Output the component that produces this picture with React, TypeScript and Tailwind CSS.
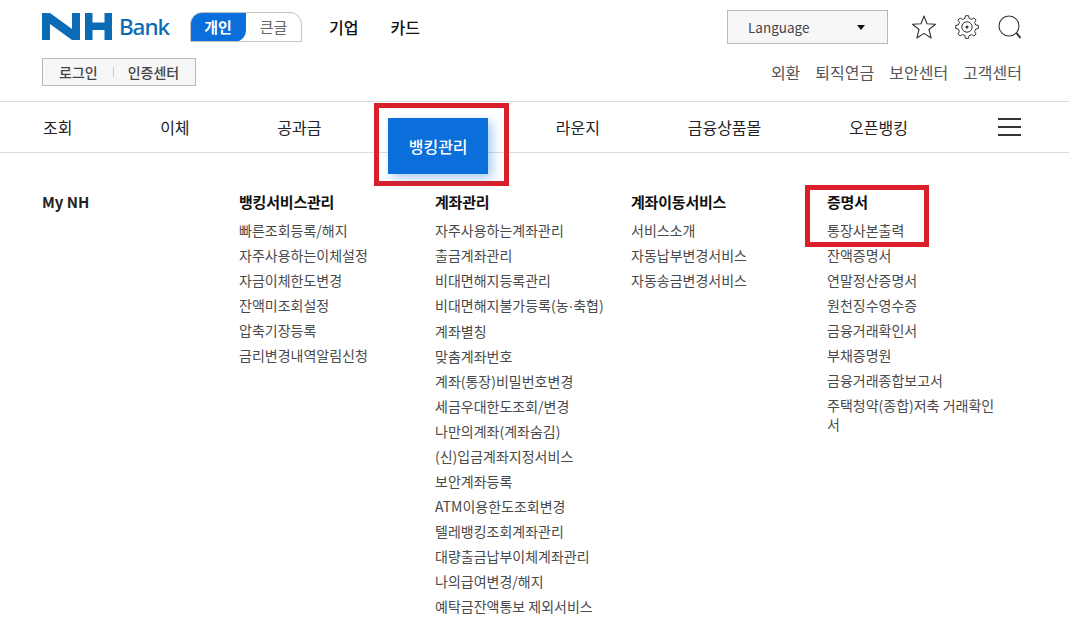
import React from "react";

const cols = [
  { t: "뱅킹서비스관리", items: ["빠른조회등록/해지", "자주사용하는이체설정", "자금이체한도변경", "잔액미조회설정", "압축기장등록", "금리변경내역알림신청"] },
  { t: "계좌관리", items: ["자주사용하는계좌관리", "출금계좌관리", "비대면해지등록관리", "비대면해지불가등록(농·축협)", "계좌별칭", "맞춤계좌번호", "계좌(통장)비밀번호변경", "세금우대한도조회/변경", "나만의계좌(계좌숨김)", "(신)입금계좌지정서비스", "보안계좌등록", "ATM이용한도조회변경", "텔레뱅킹조회계좌관리", "대량출금납부이체계좌관리", "나의급여변경/해지", "예탁금잔액통보 제외서비스"] },
  { t: "계좌이동서비스", items: ["서비스소개", "자동납부변경서비스", "자동송금변경서비스"] },
  { t: "증명서", items: ["통장사본출력", "잔액증명서", "연말정산증명서", "원천징수영수증", "금융거래확인서", "부채증명원", "금융거래종합보고서", "주택청약(종합)저축 거래확인서"] },
];

function gearPath() {
  const cx = 12, cy = 12, pts: string[] = [];
  const n = 8, ro = 11.4, ri = 8.9;
  for (let i = 0; i < n; i++) {
    const a = (i * 2 * Math.PI) / n - Math.PI / 2;
    const step = (2 * Math.PI) / n;
    const list: [number, number][] = [
      [ri, a - step * 0.3],
      [ro, a - step * 0.17],
      [ro, a + step * 0.17],
      [ri, a + step * 0.3],
    ];
    list.forEach(([r, t]) => pts.push(`${(cx + r * Math.cos(t)).toFixed(2)} ${(cy + r * Math.sin(t)).toFixed(2)}`));
  }
  return "M" + pts.join("L") + "Z";
}

function Label({ s }: { s: string }) {
  const parts = s.split("·");
  if (parts.length === 1) return <>{s}</>;
  return (
    <>
      {parts[0]}
      <span className="font-['Liberation_Sans']">·</span>
      {parts[1]}
    </>
  );
}

function Col({ t, items, w }: { t: string; items: string[]; w: string }) {
  return (
    <div className={w}>
      <div className="text-[15px] leading-[20px] font-bold text-[#111] tracking-[-0.2px]">{t}</div>
      <ul className="mt-[6px] text-[14px] text-[#4a4a4a]">
        {items.map((i) => (
          <li key={i} className="leading-[19px] py-[3px] break-all"><Label s={i} /></li>
        ))}
      </ul>
    </div>
  );
}

export default function App() {
  return (
    <div className="relative w-[1069px] h-[636px] overflow-hidden bg-white font-['Noto_Sans_CJK_KR','Noto_Sans',sans-serif]">
      <header className="h-[101px] pl-[42px] pr-[47px] pt-[10px]">
        <div className="flex items-center h-[34px]">
          <svg width="70" height="27" viewBox="0 0 70 27" className="shrink-0 mt-[-1px]">
            <g fill="#0b6cb5">
              <polygon points="0,0 8,0 30,16 30,0 38,0 38,27 30,27 8,11 8,27 0,27" />
              <rect x="43" y="0" width="7.5" height="27" />
              <rect x="62.5" y="0" width="7.5" height="27" />
              <rect x="43" y="9.5" width="27" height="7.5" />
            </g>
          </svg>
          <span className="ml-[7px] w-[51px] text-[22.5px] leading-[28px] text-[#0b6cb5] font-['Noto_Sans'] font-medium tracking-[-1.1px] whitespace-nowrap">Bank</span>
          <div className="ml-[20px] flex h-[30px] w-[112px] rounded-t-[12px] border border-[#c4c4c4] text-[15px] overflow-hidden">
            <div className="w-[56px] m-[-1px] bg-[#0a6edb] rounded-tl-[12px] rounded-br-[12px] text-white font-bold flex items-center justify-center">개인</div>
            <div className="flex-1 text-[#666] flex items-center justify-center pl-[1px]">큰글</div>
          </div>
          <span className="ml-[27px] text-[16px] font-medium text-[#111]">기업</span>
          <span className="ml-[32px] text-[16px] font-medium text-[#111]">카드</span>
          <div className="ml-auto mr-[24px] flex items-center w-[161px] h-[34px] bg-[#f7f7f7] border border-[#b8b8b8] pl-[20px] pr-[22px] justify-between">
            <span className="text-[13.5px] text-[#444]">Language</span>
            <span className="w-0 h-0 border-x-[4px] border-x-transparent border-t-[5px] border-t-[#111]" />
          </div>
          <svg width="24" height="24" viewBox="0 0 24 24" fill="none" stroke="#333" strokeWidth="1.1" strokeLinejoin="round" className="shrink-0">
            <polygon points="12,1 15,8.7 23.5,9.3 17,14.5 19.1,23 12,18.4 4.9,23 7,14.5 0.5,9.3 9,8.7" />
          </svg>
          <svg width="24" height="24" viewBox="0 0 24 24" fill="none" stroke="#333" strokeWidth="1" strokeLinejoin="round" className="shrink-0 ml-[19px]">
            <path d={gearPath()} />
            <circle cx="12" cy="12" r="5.2" />
            <circle cx="12" cy="12" r="1.5" fill="#333" stroke="none" />
          </svg>
          <svg width="24" height="24" viewBox="0 0 24 24" fill="none" stroke="#333" className="shrink-0 ml-[19px]">
            <circle cx="11" cy="11" r="10" strokeWidth="1.1" />
            <path d="M18.5 18l4 5" strokeWidth="2" />
          </svg>
        </div>
        <div className="flex items-center justify-between mt-[14px] h-[28px]">
          <div className="flex items-center h-[28px] w-[154px] bg-[#f7f7f7] border border-[#b8b8b8] text-[14px] font-medium text-[#444]">
            <span className="ml-[16px]">로그인</span>
            <span className="ml-[15px] w-px h-[10px] bg-[#ccc]" />
            <span className="ml-[14px]">인증센터</span>
          </div>
          <div className="flex gap-[15px] text-[16px] text-[#555]">
            <span>외환</span>
            <span>퇴직연금</span>
            <span>보안센터</span>
            <span>고객센터</span>
          </div>
        </div>
      </header>

      <nav className="h-[52px] border-y border-[#dcdcdc] pl-[42px] pr-[48px] flex items-start text-[16px] text-[#222]">
        <div className="flex gap-[87.7px] leading-[50px] pl-[1px]">
          <span>조회</span>
          <span>이체</span>
          <span>공과금</span>
          <span className="relative z-10 ml-[-21px] mr-[-20px] mt-[16px] h-[56px] w-[100px] bg-[#0a6edb] text-white font-medium flex items-center justify-center leading-none shadow-[4px_4px_10px_rgba(10,110,219,0.35)]">뱅킹관리</span>
          <span>라운지</span>
          <span>금융상품몰</span>
          <span>오픈뱅킹</span>
        </div>
        <div className="ml-auto mt-[16px] w-[23px] h-[18px] flex flex-col justify-between">
          <i className="block h-[2px] bg-[#333]" />
          <i className="block h-[2px] bg-[#333]" />
          <i className="block h-[2px] bg-[#333]" />
        </div>
      </nav>

      <main className="flex pl-[42px] pt-[39px]">
        <div className="w-[197px] text-[15px] leading-[20px] font-bold text-[#222]">My NH</div>
        <Col w="w-[196px]" t={cols[0].t} items={cols[0].items} />
        <Col w="w-[196px]" t={cols[1].t} items={cols[1].items} />
        <Col w="w-[196px]" t={cols[2].t} items={cols[2].items} />
        <Col w="w-[170px]" t={cols[3].t} items={cols[3].items} />
      </main>

      <div className="absolute left-[374px] top-[103px] w-[135px] h-[83px] border-[5px] border-[#d9202a] pointer-events-none" />
      <div className="absolute left-[805px] top-[185px] w-[124px] h-[62px] border-[5px] border-[#d9202a] pointer-events-none" />
    </div>
  );
}
